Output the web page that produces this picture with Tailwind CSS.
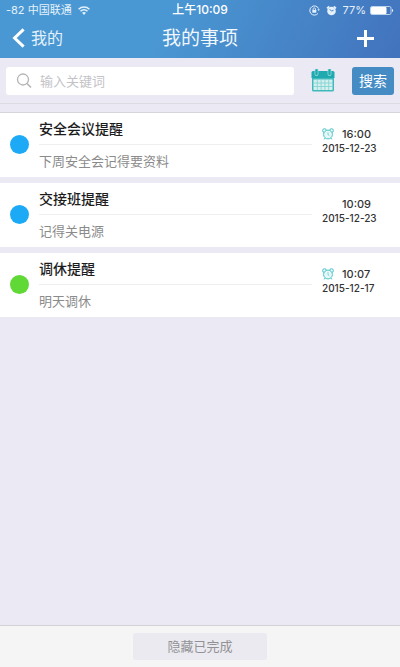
<!DOCTYPE html>
<html lang="zh-CN">
<head>
<meta charset="utf-8">
<meta name="viewport" content="width=device-width, initial-scale=1">
<title>我的事项</title>
<script src="https://cdn.jsdelivr.net/npm/@tailwindcss/browser@4"></script>
</head>
<body class="flex min-h-screen flex-col bg-[#ebeaf4] font-['Inter','Noto_Sans_CJK_SC',sans-serif]">
  <header class="h-[58px] bg-linear-[115deg] from-[#4a98d3] from-40% to-[#4273bd] text-white">
    <div class="grid h-5 grid-cols-[1fr_auto_1fr] items-center pr-1.5 pl-1.5 text-[11px] leading-5">
      <div class="flex items-center gap-1.5 text-[#e4f1fa]">
        <span>-82 中国联通</span>
        <svg class="h-[9px] w-3" viewBox="0 0 12 9" fill="none" stroke="currentColor" stroke-width="1.5"><path d="M.6 3.2a7.8 7.8 0 0 1 10.8 0M2.5 5.3a5 5 0 0 1 7 0"/><path d="M4 6.8a3 3 0 0 1 4 0L6 8.9z" fill="currentColor" stroke="none"/></svg>
      </div>
      <div class="text-xs leading-5 font-medium">上午10:09</div>
      <div class="flex items-center justify-end text-[#e4f1fa]">
        <svg class="mr-1.5 h-[11px] w-[11px]" viewBox="0 0 11 11" fill="none" stroke="currentColor"><path d="M9.6 3.6A4.6 4.6 0 1 0 9 8.4"/><path d="M8.3 4.2h2.6L9.7 6z" fill="currentColor" stroke="none"/><path d="M4.1 5V4a1.2 1.2 0 0 1 2.4 0v1" stroke-width=".8"/><path d="M3.3 4.9h4v2.8h-4z" fill="currentColor" stroke="none"/></svg>
        <svg class="mr-1.5 h-[11px] w-[11px]" viewBox="0 0 11 11"><circle cx="5.5" cy="6" r="4.3" fill="currentColor"/><path d="M1 3.4 3.2 1.3M10 3.4 7.800 1.3" stroke="currentColor" stroke-width="1.600"/><path d="M3.700 4.200 5.500 6.100 7.600 5.200" fill="none" stroke="#4585c7" stroke-width="1"/></svg>
        <span class="mr-1">77%</span>
        <svg class="h-[9px] w-6" viewBox="0 0 24 9"><rect x=".5" y=".5" width="20.5" height="8" rx="1.5" fill="none" stroke="currentColor" stroke-opacity=".75"/><rect x="1" y="1" width="15.5" height="7" rx="1" fill="#fff"/><path d="M22 3v3c1.6-.3 1.6-2.7 0-3z" fill="currentColor"/></svg>
      </div>
    </div>
    <div class="grid h-9 grid-cols-[1fr_auto_1fr] items-center px-3">
      <a href="#" class="flex items-center gap-1.5 text-base text-[#e4f1fa]">
        <svg class="h-5 w-[13px]" viewBox="0 0 13 20" fill="none" stroke="#fff" stroke-width="3"><path d="M11.600 1.400 2.600 10l9 8.600"/></svg>
        我的
      </a>
      <h1 class="pt-0.5 text-[19px] leading-7 text-[#f1f7fc]">我的事项</h1>
      <button type="button" aria-label="添加" class="mr-3.5 justify-self-end">
        <svg class="h-[17px] w-[17px]" viewBox="0 0 17 17" stroke="#fff" stroke-width="3"><path d="M8.500 0v17M0 8.500h17"/></svg>
      </button>
    </div>
  </header>

  <form class="flex h-[46px] items-center border-b border-[#dcdbe1] px-1.5">
    <label class="flex h-7 min-w-0 flex-1 items-center gap-2 rounded-[3px] bg-white pl-2.5">
      <svg class="h-4 w-4 shrink-0" viewBox="0 0 16 16" fill="none" stroke="#b5b5b8" stroke-width="1.3"><circle cx="7" cy="6.500" r="5.500"/><path d="m11 10.500 4 4" stroke-width="1.600"/></svg>
      <input type="search" placeholder="输入关键词" aria-label="搜索关键词" class="w-full min-w-0 text-[13px] leading-5 outline-none placeholder:text-[#c3c3c7]">
    </label>
    <button type="button" aria-label="日历" class="mx-4 px-px">
      <svg class="h-[23px] w-6" viewBox="0 0 24 23"><path d="M2 2h20q1.500 0 1.500 1.500V9H.5V3.500Q.5 2 2 2z" fill="#1faab0"/><path d="M1 9h22v12q0 1.500-1.500 1.500h-19Q1 22.500 1 21z" fill="#3fb9bc"/><path d="M2.500 10.500h19v10.500h-19z" fill="#d3f0ef"/><path d="M6.300 10.500V21M10.100 10.500V21M13.900 10.500V21M17.700 10.500V21M2.500 14h19M2.500 17.500h19" stroke="#7dcfd0" stroke-width=".8"/><path d="M5.500 1v4M18.500 1v4" stroke="#a9dde0" stroke-width="3.800" stroke-linecap="round"/><path d="M5.500 1.200v3.800M18.500 1.200v3.800" stroke="#1faab0" stroke-width="2.400" stroke-linecap="round"/></svg>
    </button>
    <button type="submit" class="h-7 rounded-[3px] bg-[#458cc5] px-[7px] text-sm text-white">搜索</button>
  </form>

  <main class="flex-1 pt-2">
    <ul class="flex flex-col gap-1.5 border-t border-[#d6d5db]">
      <li class="flex h-16 bg-white pl-2.5">
        <span class="mt-[22px] mr-2.5 h-[19px] w-[19px] shrink-0 rounded-full bg-[#1caaf6]"></span>
        <div class="flex-1">
          <h2 class="h-8 border-b border-[#efeff1] text-sm leading-8 font-medium text-[#1c1c1c]">安全会议提醒</h2>
          <p class="text-[13px] leading-8 text-[#8b8b8b]">下周安全会记得要资料</p>
        </div>
        <div class="mt-[13px] ml-2.5 w-[78px] font-medium text-[#333]">
          <div class="flex h-4 items-center text-[11px] leading-4">
            <svg class="mr-2 h-3 w-3 shrink-0" viewBox="0 0 12 12" fill="#e6f8f8" stroke="#4fc4c8"><circle cx="2.500" cy="2.600" r="1.900"/><circle cx="9.500" cy="2.600" r="1.900"/><path d="m3 10-.8 1.400M9 10l.8 1.400"/><circle cx="6" cy="6.500" r="4.400"/><path d="M6 4.300v2.400l1.300.8" fill="none" stroke-width=".7"/></svg>
            <time>16:00</time>
          </div>
          <time class="block text-[10px] leading-3">2015-12-23</time>
        </div>
      </li>
      <li class="flex h-16 bg-white pl-2.5">
        <span class="mt-[22px] mr-2.5 h-[19px] w-[19px] shrink-0 rounded-full bg-[#1caaf6]"></span>
        <div class="flex-1">
          <h2 class="h-8 border-b border-[#efeff1] text-sm leading-8 font-medium text-[#1c1c1c]">交接班提醒</h2>
          <p class="text-[13px] leading-8 text-[#8b8b8b]">记得关电源</p>
        </div>
        <div class="mt-[13px] ml-2.5 w-[78px] font-medium text-[#333]">
          <div class="flex h-4 items-center pl-5 text-[11px] leading-4">
            <time>10:09</time>
          </div>
          <time class="block text-[10px] leading-3">2015-12-23</time>
        </div>
      </li>
      <li class="flex h-16 bg-white pl-2.5">
        <span class="mt-[22px] mr-2.5 h-[19px] w-[19px] shrink-0 rounded-full bg-[#60d836]"></span>
        <div class="flex-1">
          <h2 class="h-8 border-b border-[#efeff1] text-sm leading-8 font-medium text-[#1c1c1c]">调休提醒</h2>
          <p class="text-[13px] leading-8 text-[#8b8b8b]">明天调休</p>
        </div>
        <div class="mt-[13px] ml-2.5 w-[78px] font-medium text-[#333]">
          <div class="flex h-4 items-center text-[11px] leading-4">
            <svg class="mr-2 h-3 w-3 shrink-0" viewBox="0 0 12 12" fill="#e6f8f8" stroke="#4fc4c8"><circle cx="2.500" cy="2.600" r="1.900"/><circle cx="9.500" cy="2.600" r="1.900"/><path d="m3 10-.8 1.400M9 10l.8 1.400"/><circle cx="6" cy="6.500" r="4.400"/><path d="M6 4.300v2.400l1.300.8" fill="none" stroke-width=".7"/></svg>
            <time>10:07</time>
          </div>
          <time class="block text-[10px] leading-3">2015-12-17</time>
        </div>
      </li>
    </ul>
  </main>

  <footer class="flex h-[42px] items-center justify-center border-t border-[#d2d2d6] bg-[#f5f5f5]">
    <button type="button" class="h-[27px] w-1/3 rounded-[2px] bg-[#ebeaf0] text-[13px] text-[#929296]">隐藏已完成</button>
  </footer>
</body>
</html>
